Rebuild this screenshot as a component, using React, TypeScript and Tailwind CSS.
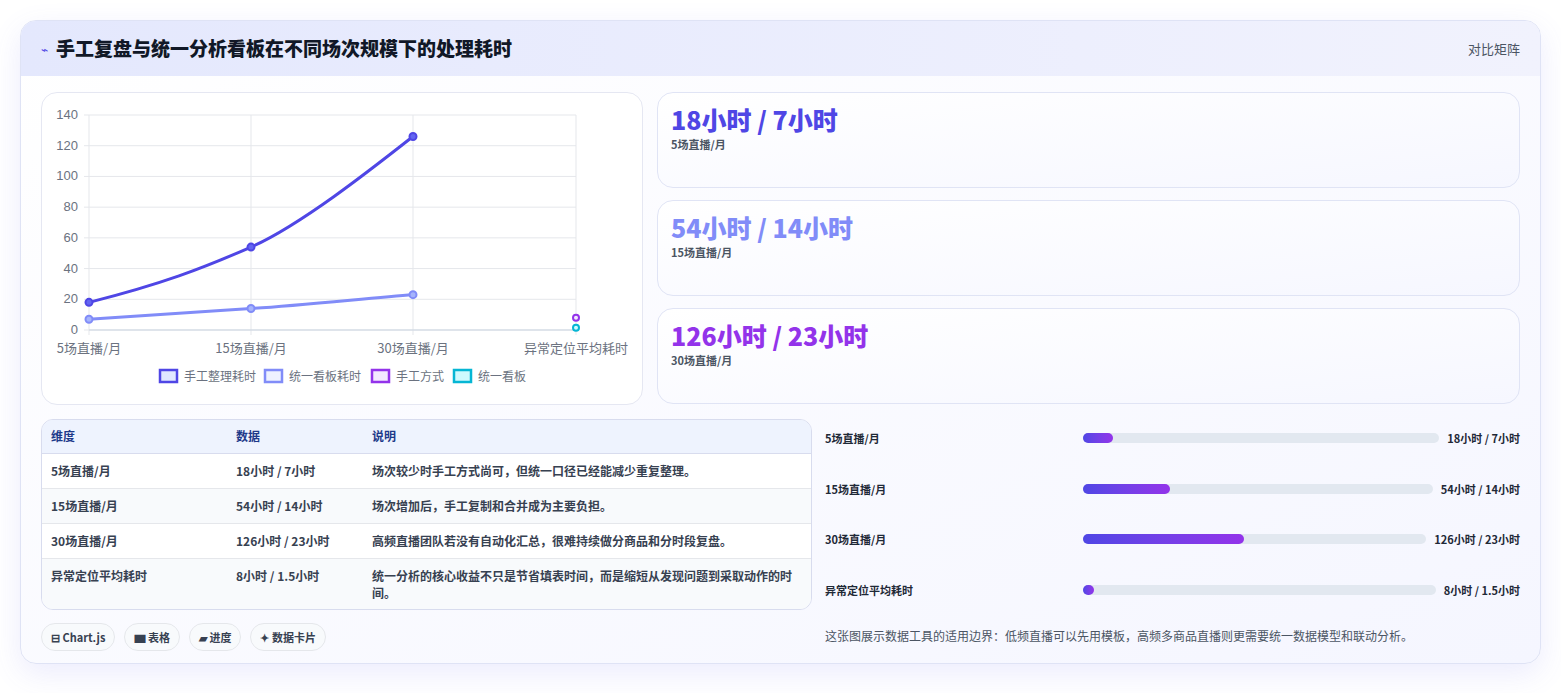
const font = { fontFamily: '"Noto Sans CJK SC", "Noto Sans", sans-serif' };

const stats = [
  { value: "18小时 / 7小时", label: "5场直播/月", color: "text-[#4f46e5]" },
  { value: "54小时 / 14小时", label: "15场直播/月", color: "text-[#818cf8]" },
  { value: "126小时 / 23小时", label: "30场直播/月", color: "text-[#9333ea]" },
];

const rows = [
  ["5场直播/月", "18小时 / 7小时", "场次较少时手工方式尚可，但统一口径已经能减少重复整理。"],
  ["15场直播/月", "54小时 / 14小时", "场次增加后，手工复制和合并成为主要负担。"],
  ["30场直播/月", "126小时 / 23小时", "高频直播团队若没有自动化汇总，很难持续做分商品和分时段复盘。"],
  ["异常定位平均耗时", "8小时 / 1.5小时", "统一分析的核心收益不只是节省填表时间，而是缩短从发现问题到采取动作的时间。"],
];

const bars = [
  { label: "5场直播/月", value: "18小时 / 7小时", pct: 8.5 },
  { label: "15场直播/月", value: "54小时 / 14小时", pct: 25 },
  { label: "30场直播/月", value: "126小时 / 23小时", pct: 47 },
  { label: "异常定位平均耗时", value: "8小时 / 1.5小时", pct: 3 },
];

function Chart() {
  const xs = [47, 209, 371, 534];
  const y = (v: number) => 237 - (v / 140) * 215;
  const ticks = [0, 20, 40, 60, 80, 100, 120, 140];
  return (
    <svg width="600" height="310" className="block">
      {ticks.map((t) => (
        <g key={t}>
          <line x1={42} x2={534} y1={y(t)} y2={y(t)} stroke="#e5e7eb" />
          <text x={36} y={y(t) + 4} textAnchor="end" fontSize="13" fill="#6b7280" fontFamily="Liberation Sans, sans-serif">{t}</text>
        </g>
      ))}
      {xs.map((x) => (
        <line key={x} x1={x} x2={x} y1={22} y2={242} stroke="#e5e7eb" />
      ))}
      <line x1={47} x2={534} y1={237} y2={237} stroke="#cbd5e1" />
      {["5场直播/月", "15场直播/月", "30场直播/月", "异常定位平均耗时"].map((l, i) => (
        <text key={l} x={xs[i]} y={260} textAnchor="middle" fontSize="13" fill="#6b7280" style={font}>{l}</text>
      ))}
      <path d={`M47 ${y(18)} C120 ${y(30)} 160 ${y(40)} 209 ${y(54)} S330 ${y(105)} 371 ${y(126)}`} fill="none" stroke="#4f46e5" strokeWidth="3" />
      <path d={`M47 ${y(7)} C120 ${y(10)} 160 ${y(12)} 209 ${y(14)} S330 ${y(21)} 371 ${y(23)}`} fill="none" stroke="#818cf8" strokeWidth="3" />
      {[[47, 18], [209, 54], [371, 126]].map(([x, v]) => (
        <circle key={x} cx={x} cy={y(v)} r="3.5" fill="#6366f1" stroke="#4f46e5" strokeWidth="2" />
      ))}
      {[[47, 7], [209, 14], [371, 23]].map(([x, v]) => (
        <circle key={x} cx={x} cy={y(v)} r="3.5" fill="#a5b4fc" stroke="#818cf8" strokeWidth="2" />
      ))}
      <circle cx={534} cy={y(8)} r="3" fill="#f3e8ff" stroke="#9333ea" strokeWidth="2" />
      <circle cx={534} cy={y(1.5)} r="3" fill="#cffafe" stroke="#06b6d4" strokeWidth="2" />
      {[
        { x: 118, c: "#4f46e5", f: "#e0e7ff", t: "手工整理耗时" },
        { x: 223, c: "#818cf8", f: "#eef2ff", t: "统一看板耗时" },
        { x: 330, c: "#9333ea", f: "#f3e8ff", t: "手工方式" },
        { x: 412, c: "#06b6d4", f: "#cffafe", t: "统一看板" },
      ].map((l) => (
        <g key={l.t}>
          <rect x={l.x} y={277} width={17} height={12} fill={l.f} stroke={l.c} strokeWidth="2.5" />
          <text x={l.x + 24} y={288} fontSize="12" fill="#6b7280" style={font}>{l.t}</text>
        </g>
      ))}
    </svg>
  );
}

export default function App() {
  return (
    <div className="min-h-screen bg-white p-5" style={font}>
      <div className="overflow-hidden rounded-2xl border border-[#dfe3f5] bg-gradient-to-br from-white to-[#f5f6ff] shadow-[0_10px_30px_rgba(99,102,241,0.12)]">
        <div className="flex h-[55px] items-center justify-between bg-gradient-to-r from-[#e4e8fd] to-[#f1f2fd] px-5">
          <div className="flex items-center gap-2">
            <span className="text-xs text-[#4f46e5]">⌁</span>
            <h1 className="text-[19px] font-black text-[#111827]">手工复盘与统一分析看板在不同场次规模下的处理耗时</h1>
          </div>
          <span className="text-[13px] text-[#4b5563]">对比矩阵</span>
        </div>
        <div className="px-5 pt-[16px] pb-[12px]">
          <div className="flex gap-[14px]">
            <div className="h-[313px] w-[602px] shrink-0 overflow-hidden rounded-2xl border border-[#e5e7f2] bg-white">
              <Chart />
            </div>
            <div className="flex flex-1 flex-col gap-3">
              {stats.map((s) => (
                <div key={s.label} className="h-[96px] rounded-2xl border border-[#e0e4f5] bg-gradient-to-br from-white to-[#f6f7ff] px-[13px] pt-[9px]">
                  <div className={`text-[25px] font-black leading-[34px] ${s.color}`}>{s.value}</div>
                  <div className="text-[11px] font-bold text-[#4b5563]">{s.label}</div>
                </div>
              ))}
            </div>
          </div>
          <div className="mt-[14px] flex gap-[13px]">
            <div className="w-[771px] shrink-0">
              <div className="overflow-hidden rounded-xl border border-[#d8dcee]">
                <table className="w-full text-left text-[12px]">
                  <thead className="bg-[#eef3fe] text-[#1e3a8a]">
                    <tr className="h-[33px] border-b border-[#d8dcee]">
                      <th className="w-[184px] pl-[9px] font-bold">维度</th>
                      <th className="w-[136px] pl-[10px] font-bold">数据</th>
                      <th className="pl-[10px] font-bold">说明</th>
                    </tr>
                  </thead>
                  <tbody className="font-bold text-[#374151]">
                    {rows.map((r, i) => (
                      <tr key={r[0]} className={`border-b border-[#e5e7eb] last:border-0 align-top ${i % 2 ? "bg-[#f8fafc]" : "bg-white"}`}>
                        <td className="py-[8px] pl-[9px]">{r[0]}</td>
                        <td className="py-[8px] pl-[10px]">{r[1]}</td>
                        <td className="py-[8px] pl-[10px] pr-4 leading-[17px]">{r[2]}</td>
                      </tr>
                    ))}
                  </tbody>
                </table>
              </div>
              <div className="mt-[13px] flex gap-[9px] text-[11px] font-bold text-[#374151]">
                {["⊟ Chart.js", "▆ 表格", "▰ 进度", "✦ 数据卡片"].map((c) => (
                  <span key={c} className="rounded-full border border-[#e5e7eb] bg-[#f8fafc] px-[9px] py-[5px]">{c}</span>
                ))}
              </div>
            </div>
            <div className="-mt-[6px] flex-1">
              <div className="flex flex-col">
                {bars.map((b) => (
                  <div key={b.label} className="flex h-[50.5px] items-center text-[11px] font-bold text-[#1f2937]">
                    <span className="w-[250px] shrink-0">{b.label}</span>
                    <div className="mx-2 h-[10px] flex-1 rounded-full bg-[#e2e8f0]">
                      <div className="h-full rounded-full bg-gradient-to-r from-[#4f46e5] to-[#9333ea]" style={{ width: `${b.pct}%` }} />
                    </div>
                    <span>{b.value}</span>
                  </div>
                ))}
              </div>
              <p className="mt-[12px] text-[12px] text-[#4b5563]">这张图展示数据工具的适用边界：低频直播可以先用模板，高频多商品直播则更需要统一数据模型和联动分析。</p>
            </div>
          </div>
        </div>
      </div>
    </div>
  );
}
